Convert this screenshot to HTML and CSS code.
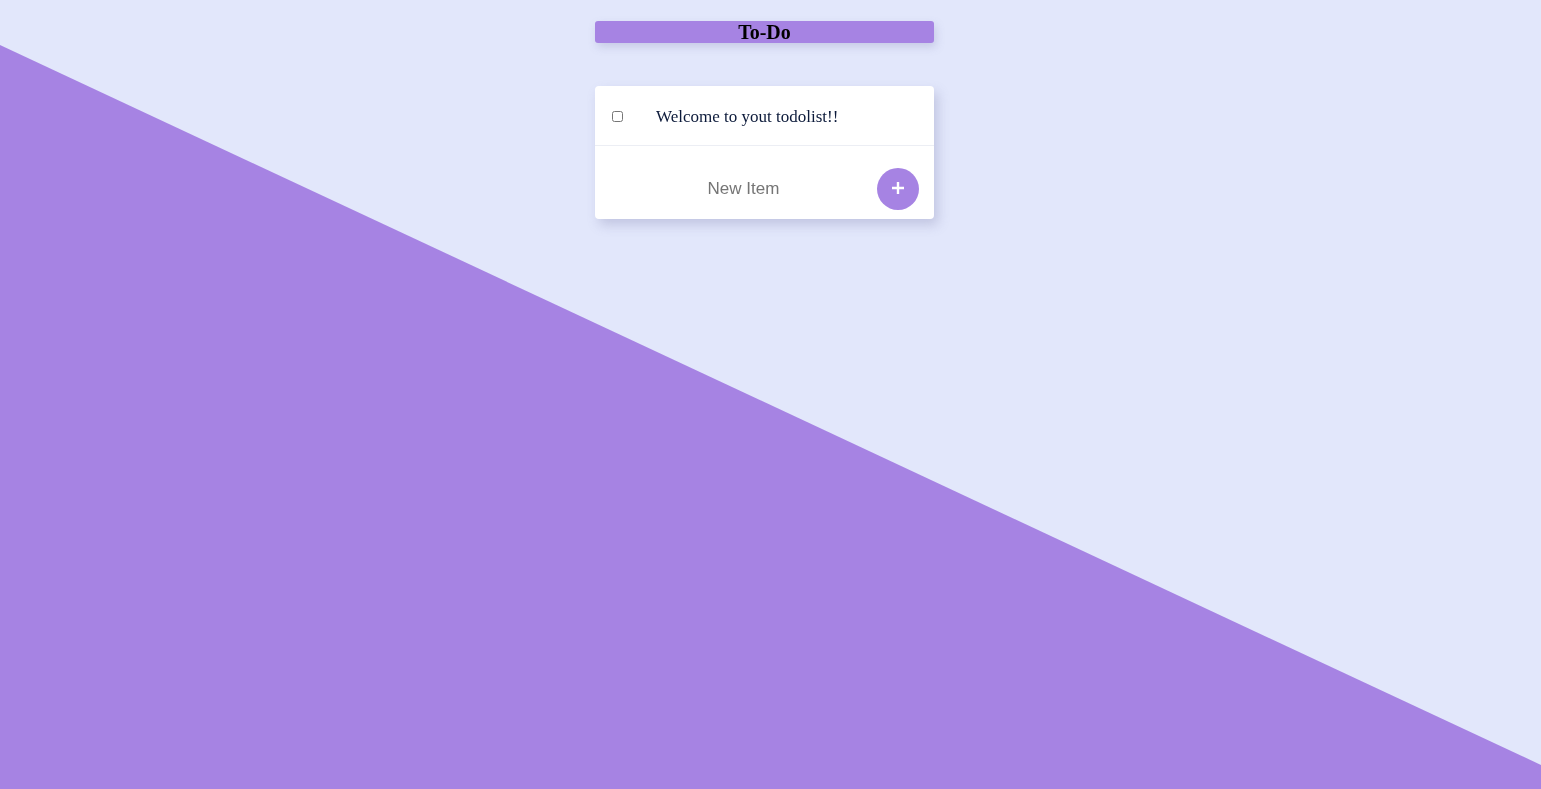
FILE: index.html
```html
<!DOCTYPE html>
<html>
<head>
<meta charset="utf-8">
<title>To-Do</title>
<link rel="stylesheet" href="styles.css">
</head>
<body>
<div class="backdrop"></div>
<main class="page">
  <div class="app">
    <div class="heading"><h1>To-Do</h1></div>
    <div class="box">
      <div class="item">
        <input type="checkbox" class="check">
        <p class="item-text">Welcome to yout todolist!!</p>
      </div>
      <form class="item-form" onsubmit="return false">
        <input type="text" class="new-item" placeholder="New Item" autocomplete="off">
        <button type="submit" class="add-btn" aria-label="Add">
          <svg width="14" height="14" viewBox="0 0 14 14"><path d="M7 1v12M1 7h12" stroke="#fff" stroke-width="2.4" stroke-linecap="butt"/></svg>
        </button>
      </form>
    </div>
  </div>
</main>
</body>
</html>
```
FILE: styles.css
```css
html, body {
  margin: 0;
  height: 100%;
}
body {
  background: #e2e7fb;
  font-family: "Liberation Serif", "Times New Roman", serif;
  overflow: hidden;
}
.backdrop {
  position: fixed;
  inset: 0;
  background: #a683e3;
  clip-path: polygon(0 45px, 100% 765px, 100% 100%, 0 100%);
  z-index: 0;
}
.page {
  position: relative;
  z-index: 1;
  display: flex;
  justify-content: center;
  padding: 21px 12px 0 0;
}
.app {
  width: 339px;
  display: flex;
  flex-direction: column;
  gap: 43px;
}
.heading {
  background: #a683e3;
  height: 22px;
  border-radius: 3px;
  box-shadow: 2px 4px 8px rgba(120, 120, 170, 0.25);
  display: flex;
  align-items: center;
  justify-content: center;
}
.heading h1 {
  margin: 0;
  font-size: 20px;
  font-weight: bold;
  color: #000;
  line-height: 22px;
}
.box {
  background: #fff;
  border-radius: 4px;
  box-shadow: 4px 6px 12px rgba(110, 110, 160, 0.28);
}
.item {
  height: 59px;
  display: flex;
  align-items: center;
  border-bottom: 1px solid #eceef4;
}
.check {
  margin: 1px 0 0 17px;
  width: 11px;
  height: 11px;
  accent-color: #a683e3;
}
.item-text {
  margin: 3px 0 0 33px;
  font-size: 17px;
  color: #0c1a3a;
}
.item-form {
  height: 73px;
  box-sizing: border-box;
  display: flex;
  align-items: center;
  margin: 0;
  padding: 13px 0 0 0;
}
.new-item {
  flex: 1;
  border: none;
  outline: none;
  background: transparent;
  font-family: "Liberation Sans", Arial, sans-serif;
  font-size: 17px;
  text-align: center;
  padding: 0 0 0 27px;
  color: #333;
}
.new-item::placeholder {
  color: #757575;
}
.add-btn {
  width: 42px;
  height: 42px;
  border-radius: 50%;
  background: #a683e3;
  border: none;
  margin: 0 15px 0 12px;
  display: flex;
  align-items: center;
  justify-content: center;
  padding: 0 0 3px 0;
  cursor: pointer;
}
```
